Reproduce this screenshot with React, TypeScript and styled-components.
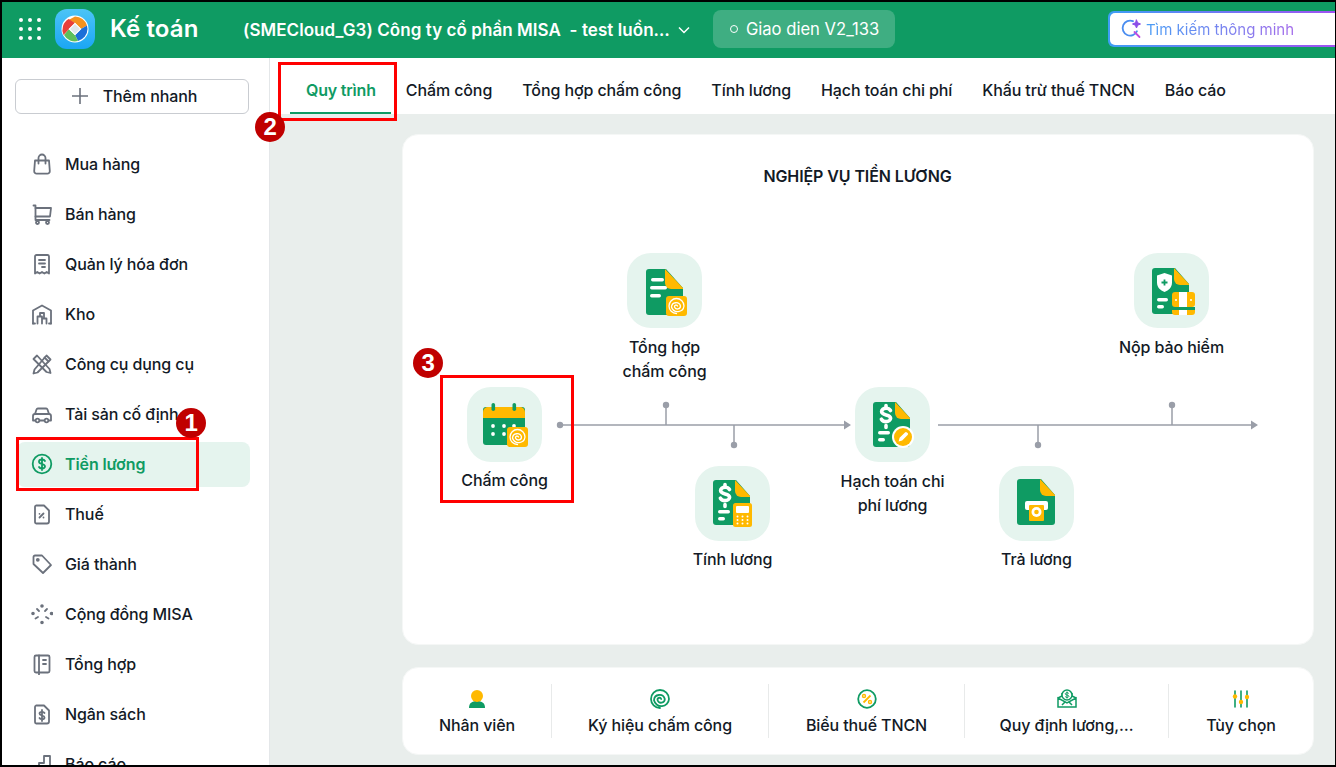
import React from "react";
import styled, { createGlobalStyle } from "styled-components";

const GREEN = "#0f9b63";
const YELLOW = "#ffb900";
const GREY = "#6b717c";
const INK = "#131a26";

const GlobalStyle = createGlobalStyle`
  html, body { margin: 0; padding: 0; height: 100%; overflow: hidden; }
  body { font-family: Inter, "Noto Sans", sans-serif; color: ${INK}; background: #000; letter-spacing: -0.1px; }
`;

const Frame = styled.div`
  position: relative;
  box-sizing: border-box;
  width: 1336px;
  height: 767px;
  border: 2px solid #000;
  border-right-width: 1px;
  display: flex;
  flex-direction: column;
  overflow: hidden;
  background: #fff;
`;

const Header = styled.header`
  flex: 0 0 56px;
  box-sizing: border-box;
  display: flex;
  align-items: center;
  padding: 0 0 2px 17px;
  background: ${GREEN};
  color: #fff;
  & > * { flex: none; }
`;

const Dots = styled.div`
  display: grid;
  grid-template-columns: repeat(3, 4px);
  gap: 5px;
  width: 22px;
  margin-right: 14px;
  span { width: 4px; height: 4px; border-radius: 50%; background: #fff; }
`;

const AppName = styled.div`
  margin: 0 0 1px 15px;
  width: 133px;
  font-size: 24px;
  font-weight: 600;
  letter-spacing: 0.1px;
`;

const Company = styled.div`
  font-size: 17px;
  font-weight: 600;
  letter-spacing: 0.06px;
  white-space: pre;
  margin-top: 2px;
`;

const Chevron = styled.svg`
  margin: 2px 22px 0 7px;
`;

const Version = styled.div`
  display: flex;
  align-items: center;
  gap: 8px;
  height: 38px;
  width: 182px;
  box-sizing: border-box;
  padding-left: 17px;
  border-radius: 8px;
  background: #3fae82;
  font-size: 16.6px;
  letter-spacing: 0;
  i { width: 6px; height: 6px; border: 1px solid #fff; border-radius: 50%; }
`;

const SearchShell = styled.div`
  margin-left: 213px;
  padding: 2px 0 2px 2px;
  width: 240px;
  height: 36px;
  box-sizing: border-box;
  border-radius: 6px 0 0 6px;
  background: linear-gradient(90deg, #3e9ef5, #a64df2);
`;

const SearchInner = styled.div`
  display: flex;
  align-items: center;
  gap: 3px;
  height: 100%;
  padding-left: 11px;
  border-radius: 5px 0 0 5px;
  background: #fff;
  font-size: 15px;
  letter-spacing: 0;
  span {
    width: 150px;
    white-space: nowrap;
    background: linear-gradient(90deg, #4a9df5, #a56bea);
    -webkit-background-clip: text;
    background-clip: text;
    color: transparent;
  }
`;

const Body = styled.div`
  flex: 1;
  display: flex;
  min-height: 0;
`;

const Sidebar = styled.aside`
  flex: 0 0 268px;
  box-sizing: border-box;
  padding: 21px 19px 0 13px;
  border-right: 1px solid #e4e7e9;
  overflow: hidden;
`;

const QuickAdd = styled.button`
  display: flex;
  align-items: center;
  justify-content: center;
  gap: 14px;
  width: 234px;
  height: 35px;
  margin-bottom: 28px;
  padding: 0 0 2px 4px;
  background: #fff;
  border: 1px solid #c9ccd1;
  border-radius: 6px;
  font: 500 16px Inter, sans-serif;
  letter-spacing: -0.1px;
  color: ${INK};
`;

const NavList = styled.nav`
  display: flex;
  flex-direction: column;
  gap: 5px;
  margin-left: 2px;
`;

const NavItem = styled.div<{ $active?: boolean }>`
  flex: 0 0 45px;
  box-sizing: border-box;
  display: flex;
  align-items: center;
  gap: 12px;
  padding: 0 0 2px 14px;
  border-radius: 8px;
  font-size: 16px;
  font-weight: ${(p) => (p.$active ? 600 : 500)};
  color: ${(p) => (p.$active ? GREEN : INK)};
  background: ${(p) => (p.$active ? "#e5f4ee" : "transparent")};
  svg {
    flex: none;
    width: 22px;
    height: 22px;
    fill: none;
    stroke: ${(p) => (p.$active ? GREEN : GREY)};
    stroke-width: 1.8;
    stroke-linecap: round;
    stroke-linejoin: round;
  }
`;

const Main = styled.main`
  flex: 1;
  display: flex;
  flex-direction: column;
  min-width: 0;
  background: #e9eeec;
`;

const TabBar = styled.div`
  flex: 0 0 56px;
  display: flex;
  padding-left: 20px;
  background: #fff;
`;

const Tab = styled.div<{ $active?: boolean }>`
  display: flex;
  align-items: center;
  height: 56px;
  padding: ${(p) => (p.$active ? "10px 15px 0 16px" : "10px 15px 0")};
  font-size: 16px;
  font-weight: ${(p) => (p.$active ? 600 : 500)};
  letter-spacing: ${(p) => (p.$active ? "-0.2px" : "-0.1px")};
  white-space: nowrap;
  color: ${(p) => (p.$active ? GREEN : INK)};
  border-bottom: 2px solid ${(p) => (p.$active ? GREEN : "transparent")};
  box-sizing: border-box;
`;

const Content = styled.div`
  flex: 1;
  display: flex;
  flex-direction: column;
  gap: 22px;
  padding: 20px 21px 0 132px;
`;

const FlowCard = styled.section`
  position: relative;
  flex: 0 0 511px;
  box-sizing: border-box;
  padding-top: 31px;
  background: #fff;
  border: 1px solid #f5f7f6;
  border-radius: 16px;
`;

const FlowTitle = styled.h2`
  margin: 0;
  padding-right: 1px;
  text-align: center;
  font-size: 16px;
  line-height: 20px;
  font-weight: 600;
`;

const Connectors = styled.svg`
  position: absolute;
  left: 0;
  top: 0;
`;

/* the nodes sit on a free diagram canvas, so their spot is part of the content */
const FlowNode = styled.div<{ $x: number; $y: number }>`
  position: absolute;
  left: ${(p) => p.$x}px;
  top: ${(p) => p.$y}px;
  width: 75px;
  display: flex;
  flex-direction: column;
  align-items: center;
`;

const Tile = styled.div`
  width: 75px;
  height: 75px;
  border-radius: 24px;
  background: #e5f4ee;
  svg { display: block; }
`;

const NodeLabel = styled.div<{ $gap: number }>`
  margin-top: ${(p) => p.$gap}px;
  width: 170px;
  flex: none;
  text-align: center;
  font-size: 16px;
  line-height: 24px;
  font-weight: 500;
`;

const ShortcutCard = styled.section`
  flex: 0 0 88px;
  box-sizing: border-box;
  display: grid;
  grid-template-columns: 149px 217px 196px 204px 1fr;
  align-items: center;
  background: #fff;
  border: 1px solid #f5f7f6;
  border-radius: 16px;
`;

const Shortcut = styled.div<{ $last?: boolean }>`
  box-sizing: border-box;
  height: 54px;
  display: flex;
  flex-direction: column;
  align-items: center;
  justify-content: space-between;
  padding: 5px 0 3px;
  border-right: ${(p) => (p.$last ? "none" : "1px solid #e8eaea")};
  font-size: 16px;
  line-height: 20px;
  font-weight: 500;
  white-space: nowrap;
`;

const Mark = styled.div<{ $x: number; $y: number; $w: number; $h: number }>`
  position: absolute;
  left: ${(p) => p.$x}px;
  top: ${(p) => p.$y}px;
  width: ${(p) => p.$w}px;
  height: ${(p) => p.$h}px;
  box-sizing: border-box;
  border: 3px solid #f00;
  pointer-events: none;
`;

const Badge = styled.div<{ $x: number; $y: number }>`
  position: absolute;
  left: ${(p) => p.$x}px;
  top: ${(p) => p.$y}px;
  width: 30px;
  height: 30px;
  display: flex;
  align-items: center;
  justify-content: center;
  border-radius: 50%;
  background: #c00000;
  color: #fff;
  font: 700 24px "Liberation Sans", Arial, sans-serif;
`;

const Swirl = ({ cx, cy }: { cx: number; cy: number }) => (
  <path
    fill="none"
    stroke="#fff"
    strokeWidth="1.3"
    strokeLinecap="round"
    d={`M${cx} ${cy + 7.5}A7.5 7.5 0 1 1 ${cx + 7.5} ${cy}A6.400 6.400 0 0 1 ${cx - 5} ${cy + 1}A4.600 4.600 0 0 1 ${cx + 4} ${cy}A3.100 3.100 0 0 1 ${cx - 2} ${cy + 1}A1.600 1.600 0 0 1 ${cx + 1} ${cy}`}
  />
);

const Doc = ({ x, y, w, h, f = 17 }: { x: number; y: number; w: number; h: number; f?: number }) => (
  <>
    <path
      d={`M${x + 3} ${y}H${x + w - f}L${x + w} ${y + f + 2}V${y + h - 3}a3 3 0 0 1 -3 3H${x + 3}a3 3 0 0 1 -3 -3V${y + 3}a3 3 0 0 1 3 -3z`}
      fill={GREEN}
    />
    <path
      d={`M${x + w - f - 1} ${y}L${x + w} ${y + f + 2}V${y + f + 3}H${x + w - f + 5}a6 6 0 0 1 -6 -6z`}
      fill={YELLOW}
    />
  </>
);

const Bar = ({ x, y, w }: { x: number; y: number; w: number }) => (
  <rect x={x} y={y} width={w} height="3.4" rx="1.7" fill="#fff" />
);

const Dollar = ({ cx, cy }: { cx: number; cy: number }) => (
  <g fill="none" stroke="#fff" strokeWidth="3.6" strokeLinecap="round">
    <path d={`M${cx + 4.5} ${cy - 4.5}c-1 -1.600 -2.600 -2.200 -4.500 -2.200c-2.600 0 -4.400 1.400 -4.400 3.300c0 4.400 9 2.200 9 6.600c0 2 -2 3.400 -4.600 3.400c-2 0 -3.600 -.8 -4.600 -2.400`} />
    <path d={`M${cx} ${cy - 9.500}V${cy - 7}M${cx} ${cy + 10.500}V${cy + 12.500}`} />
  </g>
);

const TileSvg = ({ children }: { children: React.ReactNode }) => (
  <svg width="75" height="75" viewBox="0 0 75 75">{children}</svg>
);

const SummaryIcon = () => (
  <TileSvg>
    <Doc x={19} y={16} w={37} h={46} />
    <Bar x={24} y={25} w={13} />
    <Bar x={23} y={33} w={17} />
    <Bar x={23} y={41} w={11} />
    <rect x="39" y="43" width="21" height="20" rx="3" fill={YELLOW} />
    <Swirl cx={49.5} cy={53} />
  </TileSvg>
);

const CalendarIcon = () => (
  <TileSvg>
    <path d="M19 20h36a3 3 0 0 1 3 3v32a3 3 0 0 1 -3 3H19a3 3 0 0 1 -3 -3V23a3 3 0 0 1 3 -3z" fill={GREEN} />
    <path d="M21 20h32a5 5 0 0 1 5 5v6H16v-6a5 5 0 0 1 5 -5z" fill={YELLOW} />
    <rect x="24.5" y="16" width="3.6" height="8" rx="1.8" fill={GREEN} />
    <rect x="45.5" y="16" width="3.6" height="8" rx="1.8" fill={GREEN} />
    {[26, 37, 47].map((x) => <circle key={x} cx={x} cy={39} r="1.9" fill="#fff" />)}
    {[26, 37].map((x) => <circle key={x} cx={x} cy={47} r="1.9" fill="#fff" />)}
    <rect x="40" y="40" width="21" height="20" rx="3" fill={YELLOW} />
    <Swirl cx={50.5} cy={50} />
  </TileSvg>
);

const PayrollIcon = () => (
  <TileSvg>
    <Doc x={18} y={14} w={37} h={45} f={14} />
    <Dollar cx={30} cy={28} />
    <Bar x={23} y={44} w={12} />
    <Bar x={23} y={51} w={7} />
    <rect x="38" y="37" width="19" height="24" rx="2.5" fill={YELLOW} />
    <rect x="41" y="40" width="13" height="7" rx="1" fill="#fff" />
    {[42.5, 47.5, 52.5].map((x) =>
      [50.5, 54, 57.5].map((y) => <circle key={`${x}${y}`} cx={x} cy={y} r="1" fill="#fff" />)
    )}
  </TileSvg>
);

const PostingIcon = () => (
  <TileSvg>
    <Doc x={18} y={15} w={37} h={45} f={14} />
    <Dollar cx={31} cy={28} />
    <Bar x={23} y={44} w={12} />
    <Bar x={23} y={51} w={7} />
    <circle cx="48" cy="50" r="11" fill="#fff" />
    <circle cx="48" cy="50" r="9" fill={YELLOW} />
    <path d="M43.6 54.4l1 -3.6l5.4 -5.4a1.3 1.3 0 0 1 1.9 0l.7 .7a1.3 1.3 0 0 1 0 1.9l-5.4 5.4z" fill="#fff" />
  </TileSvg>
);

const PayIcon = () => (
  <TileSvg>
    <Doc x={18} y={13} w={38} h={46} f={14} />
    <rect x="26" y="35" width="23" height="9" rx="2" fill="#fff" />
    <rect x="30" y="39" width="15" height="16" rx="1" fill={YELLOW} />
    <circle cx="37.5" cy="46" r="5" fill="#fff" />
    <circle cx="37.5" cy="46" r="2.300" fill={YELLOW} />
  </TileSvg>
);

const InsuranceIcon = () => (
  <TileSvg>
    <Doc x={18} y={15} w={37} h={46} f={14} />
    <path d="M30.5 20l7.5 2.5v7c0 4.8 -3.2 8 -7.5 9.5c-4.3 -1.500 -7.500 -4.700 -7.500 -9.500v-7z" fill="#fff" />
    <path d="M30.500 26.500v6M27.500 29.500h6" stroke={GREEN} strokeWidth="1.800" />
    <Bar x={23} y={45} w={11} />
    <Bar x={23} y={52} w={7} />
    <rect x="38" y="39" width="23" height="15" rx="3" fill={YELLOW} />
    <rect x="38" y="54" width="23" height="3" fill={GREEN} />
    <path d="M38 57h23v2a3 3 0 0 1 -3 3H41a3 3 0 0 1 -3 -3z" fill={YELLOW} />
    <rect x="45" y="39" width="8" height="15" fill="#fff" />
    <rect x="45" y="57" width="8" height="5" fill="#fff" />
    <circle cx="42" cy="47" r="1" fill="#fff" />
    <circle cx="57" cy="47" r="1" fill="#fff" />
  </TileSvg>
);

const LogoIcon = () => (
  <svg width="40" height="40" viewBox="0 0 40 40">
    <defs>
      <linearGradient id="logoBg" x1="0" y1="0" x2="0" y2="1">
        <stop offset="0" stopColor="#4cc4f6" />
        <stop offset="1" stopColor="#1ba6f4" />
      </linearGradient>
    </defs>
    <rect width="40" height="40" rx="12" fill="url(#logoBg)" />
    <circle cx="20" cy="20" r="13.500" fill="#fff" />
    <path d="M20 7.500a12.500 12.500 0 0 1 12 9l-6 3.500l-6 -6l-6.500 -3z" fill="#f5921e" />
    <path d="M32.500 20a12.500 12.500 0 0 1 -9.500 12l-3 -6l6 -6l6 -3.500z" fill="#1b6fd8" />
    <path d="M23 32a12.500 12.500 0 0 1 -14 -6l5 -6l6 6z" fill="#5cbf5a" />
    <path d="M8.600 26a12.500 12.500 0 0 1 5 -16l6.400 4l-6 6z" fill="#e8403a" />
    <rect x="16" y="16" width="8" height="8" transform="rotate(45 20 20)" fill="#dfe6ea" stroke="#fff" />
  </svg>
);

const SparkSearch = () => (
  <svg width="22" height="22" viewBox="0 0 22 22" fill="none" strokeWidth="1.800" strokeLinecap="round">
    <path d="M12 3.200a7.500 7.500 0 1 0 4 10" stroke="#4a8df0" />
    <path d="M13.500 14l5 5" stroke="#c04be0" />
    <path d="M15.500 2l1.200 2.800l2.800 1.200l-2.800 1.200l-1.200 2.800l-1.200 -2.800l-2.800 -1.200l2.800 -1.200z" fill="#8b4fe8" stroke="#8b4fe8" strokeWidth="1" />
  </svg>
);

const navIcons: Record<string, React.ReactNode> = {
  bag: <><path d="M4 7.500h14l.8 10.500a2.500 2.500 0 0 1 -2.500 2.700H5.700a2.500 2.500 0 0 1 -2.500 -2.700z" /><path d="M7.500 10.500V5a3.500 3.500 0 0 1 7 0v5.500" /></>,
  cart: <><path d="M2.500 2.500h2v14.500h14" /><path d="M4.500 5h15.500l-1 8.500h-14.500" /><circle cx="6.500" cy="19.500" r="1.500" /><circle cx="16.500" cy="19.500" r="1.500" /></>,
  receipt: <><path d="M4 3.500a1.500 1.500 0 0 1 1.500 -1.500h11a1.500 1.500 0 0 1 1.500 1.500v17l-2.300 -1.500l-2.300 1.500l-2.400 -1.500l-2.400 1.500l-2.300 -1.500L4 20.500z" /><path d="M8 7h6M8 10.500h6M11 14h3" /></>,
  store: <><path d="M2 20.500V7.500l9 -5l9 5v13" /><path d="M6.500 20.500v-7h4.500v7M11 20.500v-5h4.500v5M9 13.500v-3.500h4v5.500M2 20.500h2M18 20.500h2" /></>,
  tools: <><path d="M6 2.500L2.500 6l13 13l4 1l-1 -4z" /><path d="M15.500 2.500l4 4l-13 13l-4 1l1 -4z" /><path d="M13.500 4.500l4 4" /></>,
  car: <><path d="M2 13a2 2 0 0 1 2 -2h14a2 2 0 0 1 2 2v4.500H2z" /><path d="M4 11l1.500 -4.500a1.500 1.500 0 0 1 1.500 -1h8a1.500 1.500 0 0 1 1.500 1L18 11" /><circle cx="6.500" cy="17.500" r="1.800" fill="#fff" /><circle cx="15.500" cy="17.500" r="1.800" fill="#fff" /></>,
  dollar: <><circle cx="11" cy="11" r="9.300" /><path d="M14 8c-.5 -1 -1.500 -1.500 -3 -1.500c-1.800 0 -3 1 -3 2.200c0 3 6 1.600 6 4.600c0 1.200 -1.200 2.200 -3 2.200c-1.500 0 -2.500 -.5 -3 -1.500M11 5v12" /></>,
  tax: <><path d="M5 2.500h8l5 5v11a2 2 0 0 1 -2 2H5a1.500 1.500 0 0 1 -1 -1.500V4a1.500 1.500 0 0 1 1 -1.500z" /><path d="M8.500 14.500l4 -4M8.500 10.800v.01M12.500 14.500v.01" /></>,
  tag: <><path d="M2.500 4a1.500 1.500 0 0 1 1.500 -1.500h7l9 9.500l-8 8l-9.500 -9z" /><circle cx="6.800" cy="6.800" r="1" /></>,
  community: <><path d="M11 3v.01M11 19.500v.01M2 10.500v.01M20.500 10.500v.01" strokeWidth="3.600" /><path d="M6 6l2 2M16 6l-2 2M4.500 15.500l2.500 -1.500M17.500 15.500l-2.500 -1.500" /></>,
  book: <><path d="M5 2.500h12a1.500 1.500 0 0 1 1.500 1.500v14a1.500 1.500 0 0 1 -1.500 1.500H5a1.500 1.500 0 0 1 -1.500 -1.500V4A1.500 1.500 0 0 1 5 2.500z" /><path d="M8 2.500v19M12 7h3M12 11h3" /></>,
  budget: <><path d="M5 2.500h8l5 5v11a2 2 0 0 1 -2 2H5a1.500 1.500 0 0 1 -1 -1.500V4a1.500 1.500 0 0 1 1 -1.500z" /><path d="M13.500 10c-.4 -.8 -1.200 -1.200 -2.500 -1.200c-1.500 0 -2.500 .8 -2.500 1.800c0 2.500 5 1.300 5 3.800c0 1 -1 1.800 -2.500 1.800c-1.300 0 -2.100 -.4 -2.500 -1.200M11 7v11" /></>,
  chart: <path d="M3 21v-6h5v-5h5V3h6v18z" />,
};

const navItems = [
  { label: "Mua hàng", icon: "bag" },
  { label: "Bán hàng", icon: "cart" },
  { label: "Quản lý hóa đơn", icon: "receipt" },
  { label: "Kho", icon: "store" },
  { label: "Công cụ dụng cụ", icon: "tools" },
  { label: "Tài sản cố định", icon: "car" },
  { label: "Tiền lương", icon: "dollar", active: true },
  { label: "Thuế", icon: "tax" },
  { label: "Giá thành", icon: "tag" },
  { label: "Cộng đồng MISA", icon: "community" },
  { label: "Tổng hợp", icon: "book" },
  { label: "Ngân sách", icon: "budget" },
  { label: "Báo cáo", icon: "chart" },
];

const tabs = ["Quy trình", "Chấm công", "Tổng hợp chấm công", "Tính lương", "Hạch toán chi phí", "Khấu trừ thuế TNCN", "Báo cáo"];

// x/y are relative to the flow card's padding box (403,135)
const nodes = [
  { x: 64, y: 252, gap: 6, label: <>Chấm công</>, icon: <CalendarIcon /> },
  { x: 224, y: 118, gap: 7, label: <>Tổng hợp<br />chấm công</>, icon: <SummaryIcon /> },
  { x: 292, y: 331, gap: 6, label: <>Tính lương</>, icon: <PayrollIcon /> },
  { x: 452, y: 252, gap: 7, label: <>Hạch toán chi<br />phí lương</>, icon: <PostingIcon /> },
  { x: 596, y: 331, gap: 6, label: <>Trả lương</>, icon: <PayIcon /> },
  { x: 731, y: 118, gap: 7, label: <>Nộp bảo hiểm</>, icon: <InsuranceIcon /> },
];

const shortcuts = [
  {
    label: "Nhân viên",
    icon: (
      <svg width="20" height="20" viewBox="0 0 20 20">
        <path d="M2 19c0 -5 3 -7 8 -7s8 2 8 7z" fill={GREEN} />
        <circle cx="10" cy="7" r="6" fill={YELLOW} />
      </svg>
    ),
  },
  {
    label: "Ký hiệu chấm công",
    icon: (
      <svg width="20" height="20" viewBox="0 0 20 20" fill="none" stroke={GREEN} strokeWidth="1.800" strokeLinecap="round">
        <path d="M10 19A9 9 0 1 1 19 10A7.600 7.600 0 0 1 4 11.200A5.500 5.500 0 0 1 14.800 10A3.700 3.700 0 0 1 7.600 11.200A1.900 1.900 0 0 1 11.200 10" />
      </svg>
    ),
  },
  {
    label: "Biểu thuế TNCN",
    icon: (
      <svg width="20" height="20" viewBox="0 0 20 20" fill="none">
        <circle cx="10" cy="10" r="8.800" stroke={GREEN} strokeWidth="1.800" />
        <path d="M6.500 13.500l7 -7" stroke={YELLOW} strokeWidth="1.800" />
        <circle cx="7" cy="7" r="1.500" stroke={YELLOW} strokeWidth="1.400" />
        <circle cx="13" cy="13" r="1.500" stroke={YELLOW} strokeWidth="1.400" />
      </svg>
    ),
  },
  {
    label: "Quy định lương,…",
    icon: (
      <svg width="20" height="20" viewBox="0 0 20 20" fill="none" stroke={GREEN} strokeWidth="1.500">
        <path d="M1 9l4 -2v-3M19 9l-4 -2v-3M1 9v9h18V9l-9 5z" />
        <circle cx="10" cy="6" r="5" fill="#fff" />
        <path d="M11.800 4.500c-.4 -.6 -1 -.8 -1.800 -.8c-1 0 -1.700 .5 -1.700 1.200c0 1.700 3.600 .7 3.600 2.300c0 .7 -.8 1.200 -1.900 1.200c-.8 0 -1.400 -.3 -1.800 -.9M10 2.500v7" strokeWidth="1" />
        <path d="M5 16l3 -3M15 16l-3 -3" />
      </svg>
    ),
  },
  {
    label: "Tùy chọn",
    icon: (
      <svg width="20" height="20" viewBox="0 0 20 20" fill="none" strokeWidth="1.600" strokeLinecap="round">
        <path d="M4 2v16M10 2v16M16 2v16" stroke={GREEN} />
        <circle cx="4" cy="7.500" r="2.200" fill={YELLOW} />
        <circle cx="10" cy="13" r="2.200" fill={YELLOW} />
        <circle cx="16" cy="8" r="2.200" fill={YELLOW} />
      </svg>
    ),
  },
];

const App: React.FC = () => {
  return (
    <Frame>
      <GlobalStyle />
      <Header>
        <Dots>
          {Array.from({ length: 9 }).map((_, i) => <span key={i} />)}
        </Dots>
        <LogoIcon />
        <AppName>Kế toán</AppName>
        <Company>{"(SMECloud_G3) Công ty cổ phần MISA  - test luồn…"}</Company>
        <Chevron width="14" height="14" viewBox="0 0 14 14" fill="none" stroke="#fff" strokeWidth="1.500">
          <path d="M2 4.500l5 5l5 -5" />
        </Chevron>
        <Version><i />Giao dien V2_133</Version>
        <SearchShell>
          <SearchInner>
            <SparkSearch />
            <span>Tìm kiếm thông minh</span>
          </SearchInner>
        </SearchShell>
      </Header>
      <Body>
        <Sidebar>
          <QuickAdd>
            <svg width="18" height="18" viewBox="0 0 18 18" stroke={GREY} strokeWidth="1.600">
              <path d="M9 1v16M1 9h16" />
            </svg>
            Thêm nhanh
          </QuickAdd>
          <NavList>
            {navItems.map((item) => (
              <NavItem key={item.label} $active={item.active}>
                <svg viewBox="0 0 22 22">{navIcons[item.icon]}</svg>
                {item.label}
              </NavItem>
            ))}
          </NavList>
        </Sidebar>
        <Main>
          <TabBar>
            {tabs.map((tab, i) => (
              <Tab key={tab} $active={i === 0}>{tab}</Tab>
            ))}
          </TabBar>
          <Content>
            <FlowCard>
              <FlowTitle>NGHIỆP VỤ TIỀN LƯƠNG</FlowTitle>
              <Connectors width="909" height="509" viewBox="0 0 909 509" fill="none" stroke="#9a9ea8" strokeWidth="1.500">
                <path d="M157 290H442M535 290H849M263 270v20M331 290v20M635 290v20M769 270v20" />
                <path d="M441 285.500l7 4.500l-7 4.500zM848 285.500l7 4.500l-7 4.500z" fill="#9a9ea8" stroke="none" />
                {[[157, 290], [263, 270], [331, 310], [635, 310], [769, 270]].map(([cx, cy]) => (
                  <circle key={cx} cx={cx} cy={cy} r="3.200" fill="#9a9ea8" stroke="none" />
                ))}
              </Connectors>
              {nodes.map((n) => (
                <FlowNode key={n.x} $x={n.x} $y={n.y}>
                  <Tile>{n.icon}</Tile>
                  <NodeLabel $gap={n.gap}>{n.label}</NodeLabel>
                </FlowNode>
              ))}
            </FlowCard>
            <ShortcutCard>
              {shortcuts.map((s, i) => (
                <Shortcut key={s.label} $last={i === shortcuts.length - 1}>
                  {s.icon}
                  <span>{s.label}</span>
                </Shortcut>
              ))}
            </ShortcutCard>
          </Content>
        </Main>
      </Body>
      {/* red annotation marks drawn over the screenshot, frame starts at 2,2 */}
      <Mark $x={276} $y={60} $w={119} $h={59} />
      <Mark $x={14} $y={435} $w={183} $h={54} />
      <Mark $x={438} $y={373} $w={134} $h={128} />
      <Badge $x={174} $y={406}>1</Badge>
      <Badge $x={253} $y={110}>2</Badge>
      <Badge $x={411} $y={346}>3</Badge>
    </Frame>
  );
};

export default App;
